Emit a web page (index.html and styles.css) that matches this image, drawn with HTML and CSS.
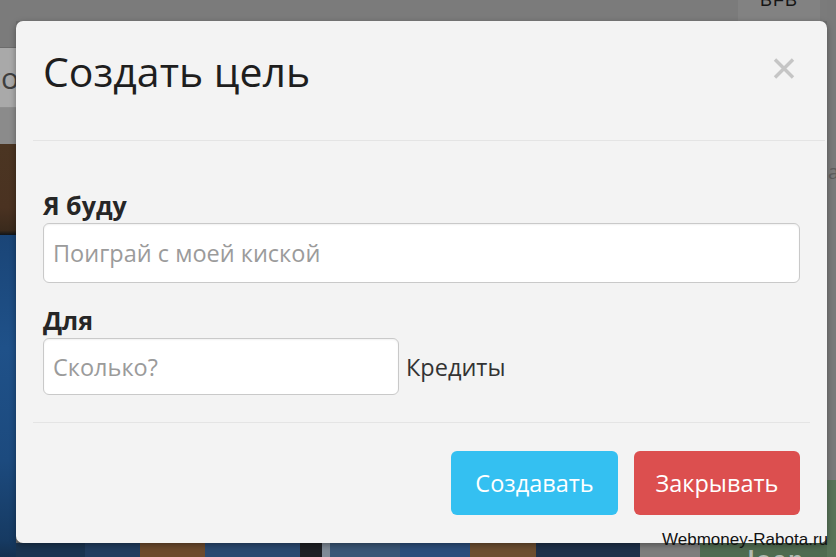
FILE: index.html
```html
<!DOCTYPE html>
<html lang="ru">
<head>
<meta charset="utf-8">
<title>Создать цель</title>
<link rel="stylesheet" href="styles.css">
</head>
<body>
<div class="backdrop">
  <div class="bd-left">
    <div class="band b-gray1"></div>
    <div class="band b-light"><span class="cut-text">co</span></div>
    <div class="band b-gray2"></div>
    <div class="band b-brown"></div>
    <div class="band b-blue"></div>
  </div>
  <div class="bd-mid">
    <div class="top-strip">
      <div class="bfb"><span class="bfb-text">BFB</span></div>
    </div>
    <div class="mid-fill"></div>
    <div class="bottom-strip">
      <div class="seg s1"></div>
      <div class="seg s2"></div>
      <div class="seg s3"></div>
      <div class="seg s4"></div>
      <div class="seg s5"></div>
      <div class="seg s6"></div>
      <div class="seg s7"></div>
      <div class="seg s8"></div>
      <div class="seg s9"></div>
      <div class="seg s10"></div>
      <div class="seg s11"></div>
      <div class="seg s12"><span class="loan">loan</span></div>
    </div>
  </div>
  <div class="bd-right">
    <div class="r-gray"><span class="r-text">a</span></div>
    <div class="r-green"></div>
  </div>
</div>

<div class="modal">
  <div class="modal-header">
    <h4 class="modal-title">Создать цель</h4>
    <button class="close" type="button" aria-label="Закрыть">
      <svg width="22" height="21" viewBox="0 0 22 21"><path d="M2 1.5 L20 19.5 M20 1.5 L2 19.5" stroke="#c5c5c5" stroke-width="3.4" fill="none"/></svg>
    </button>
  </div>
  <div class="modal-body">
    <label class="field-label">Я буду</label>
    <div class="input input-wide"><span class="placeholder">Поиграй с моей киской</span></div>
    <label class="field-label label-second">Для</label>
    <div class="amount-row">
      <div class="input input-short"><span class="placeholder">Сколько?</span></div>
      <span class="unit">Кредиты</span>
    </div>
  </div>
  <div class="modal-footer">
    <button class="btn btn-info" type="button">Создавать</button>
    <button class="btn btn-danger" type="button">Закрывать</button>
  </div>
</div>

<div class="watermark">Webmoney-Rabota.ru</div>
</body>
</html>
```

FILE: styles.css
```css
* { box-sizing: border-box; }
html, body {
  margin: 0;
  padding: 0;
  width: 836px;
  height: 557px;
  overflow: hidden;
}
body {
  position: relative;
  font-family: "Open Sans", "DejaVu Sans", sans-serif;
  background: #7a7a7a;
}

/* ---------- backdrop page (dimmed) ---------- */
.backdrop {
  display: flex;
  width: 836px;
  height: 557px;
}
.bd-left {
  width: 16px;
  display: flex;
  flex-direction: column;
  overflow: hidden;
}
.band { flex: none; }
.b-gray1 { height: 48px; background: #7b7b7b; border-bottom: 1px solid #6c6c6c; }
.b-light {
  height: 60px;
  background: #a9a9a9;
  border-bottom: 1px solid #8f8f8f;
  display: flex;
  justify-content: flex-end;
  align-items: center;
  overflow: hidden;
}
.cut-text {
  font-family: "Open Sans", sans-serif;
  font-size: 30px;
  color: #3f3f3f;
  line-height: 1;
  margin-right: -3px;
  white-space: nowrap;
}
.b-gray2 { height: 36px; background: #8b8b8b; }
.b-brown {
  height: 91px;
  background: linear-gradient(180deg, #4b3522 0%, #4a3221 70%, #3a2a1c 95%, #101418 100%);
}
.b-blue {
  flex: 1;
  background: linear-gradient(180deg, #1a4577 0%, #1f5189 35%, #1c4a7e 70%, #163a62 95%, #14304f 100%);
}

.bd-mid {
  flex: 1;
  display: flex;
  flex-direction: column;
}
.top-strip {
  height: 21px;
  background: #7b7b7b;
  display: flex;
  justify-content: flex-end;
  padding-right: 7px;
}
.bfb {
  width: 82px;
  height: 21px;
  background: #828282;
  overflow: hidden;
  display: flex;
  justify-content: center;
}
.bfb-text {
  font-family: "Liberation Sans", sans-serif;
  font-size: 18px;
  line-height: 18px;
  color: #161616;
  margin-top: -9px;
  letter-spacing: 1px;
}
.mid-fill { flex: 1; background: #6f6f6f; }
.bottom-strip {
  height: 14px;
  display: flex;
}
.seg { height: 100%; flex: none; }
.s1 { width: 69px; background: #1a3450; }
.s2 { width: 55px; background: #213d5f; }
.s3 { width: 65px; background: #6c4a2d; }
.s4 { width: 95px; background: #2a4970; }
.s5 { width: 22px; background: #1e1f24; }
.s6 { width: 8px; background: #7f8a96; }
.s7 { width: 70px; background: #3a5676; }
.s8 { width: 70px; background: #2c4e7b; }
.s9 { width: 66px; background: #6c4d30; }
.s10 { width: 104px; background: #1e3049; }
.s11 { width: 60px; background: #7d7d7d; }
.s12 {
  flex: 1;
  background: #4f6b50;
  overflow: hidden;
  display: flex;
  justify-content: flex-end;
  padding-right: 22px;
  padding-top: 5px;
}
.loan {
  font-family: "Liberation Sans", sans-serif;
  font-weight: bold;
  font-size: 24px;
  line-height: 28px;
  height: 28px;
  margin-top: -2px;
  color: #b2bab2;
  letter-spacing: 2px;
}

.bd-right {
  width: 9px;
  display: flex;
  flex-direction: column;
  overflow: hidden;
}
.r-gray {
  flex: 1;
  background: #7a7a7a;
  padding-top: 162px;
  white-space: nowrap;
}
.r-text {
  font-family: "Open Sans", sans-serif;
  font-size: 20px;
  line-height: 20px;
  color: #5d5d5d;
  margin-left: 1px;
}
.r-green { height: 77px; background: #587458; }

/* ---------- modal ---------- */
.modal {
  position: absolute;
  left: 16px;
  top: 21px;
  width: 811px;
  height: 522px;
  background: #f3f3f3;
  border-radius: 7px;
  box-shadow: 0 2px 6px rgba(0, 0, 0, 0.35);
  display: flex;
  flex-direction: column;
  padding: 0 17px;
}
.modal-header {
  height: 120px;
  padding: 25px 30px 0 10px;
  margin-right: -15px;
  border-bottom: 1px solid #e4e4e4;
  display: flex;
  justify-content: space-between;
  align-items: flex-start;
}
.modal-title {
  margin: 0;
  font-family: "Open Sans", sans-serif;
  font-weight: normal;
  font-size: 41px;
  line-height: 50px;
  color: #1e1e1e;
}
.close {
  margin: 12px 0 0 0;
  padding: 0;
  border: 0;
  background: transparent;
  width: 22px;
  height: 21px;
  display: block;
}
.close svg { display: block; }

.modal-body {
  height: 282px;
  padding: 49px 10px 0 10px;
  border-bottom: 1px solid #e4e4e4;
  display: flex;
  flex-direction: column;
  align-items: flex-start;
}
.field-label {
  display: block;
  font-family: "Open Sans", sans-serif;
  font-weight: bold;
  font-size: 25px;
  line-height: 30px;
  color: #262626;
  margin-bottom: 3px;
}
.label-second { margin-top: 22px; }
.input {
  background: #ffffff;
  border: 1.5px solid #c9c9c9;
  border-radius: 6px;
  box-shadow: inset 0 1px 2px rgba(0, 0, 0, 0.06);
  display: flex;
  align-items: center;
  padding-left: 9px;
}
.input-wide { width: 757px; height: 60px; }
.input-short { width: 356px; height: 57px; }
.placeholder {
  font-family: "Open Sans", sans-serif;
  font-size: 23.5px;
  color: #9b9b9b;
  white-space: nowrap;
}
.amount-row {
  display: flex;
  align-items: center;
}
.unit {
  margin-left: 7px;
  font-family: "Open Sans", sans-serif;
  font-size: 23.5px;
  color: #333333;
}

.modal-footer {
  flex: 1;
  padding: 28px 10px 0 10px;
  display: flex;
  justify-content: flex-end;
  align-items: flex-start;
  gap: 16px;
}
.btn {
  height: 64px;
  border: 0;
  border-radius: 6px;
  font-family: "Open Sans", sans-serif;
  font-size: 23.5px;
  color: #ffffff;
  padding: 0;
}
.btn-info { width: 167px; background: #34c0f1; }
.btn-danger { width: 166px; background: #dc4f4f; }

/* ---------- watermark ---------- */
.watermark {
  position: absolute;
  right: 8px;
  bottom: 10px;
  font-family: "Liberation Sans", sans-serif;
  font-size: 17px;
  line-height: 15px;
  color: #111111;
}
```
